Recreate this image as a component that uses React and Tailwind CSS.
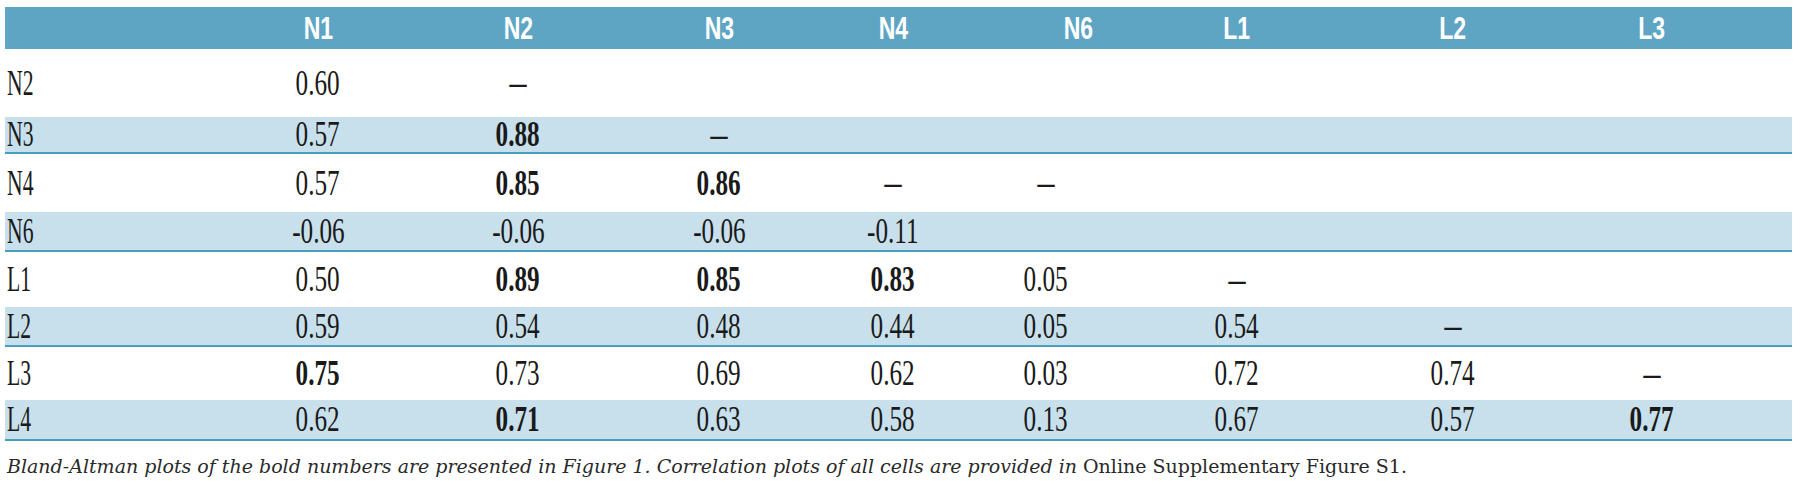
import React from "react";

const COLS = "grid grid-cols-[213px_200px_200px_202px_146px_160px_222px_210px_188px_46px] items-center";

const rows = [
  { label: "N2", blue: false, h: "h-[68px]", cells: ["0.60", "–"] },
  { label: "N3", blue: true, h: "h-[37px]", cells: ["0.57", "*0.88", "–"] },
  { label: "N4", blue: false, h: "h-[58px]", cells: ["0.57", "*0.85", "*0.86", "–", "–"] },
  { label: "N6", blue: true, h: "h-[40px]", cells: ["-0.06", "-0.06", "-0.06", "-0.11"] },
  { label: "L1", blue: false, h: "h-[55px]", cells: ["0.50", "*0.89", "*0.85", "*0.83", "0.05", "–"] },
  { label: "L2", blue: true, h: "h-[40px]", cells: ["0.59", "0.54", "0.48", "0.44", "0.05", "0.54", "–"] },
  { label: "L3", blue: false, h: "h-[53px]", cells: ["*0.75", "0.73", "0.69", "0.62", "0.03", "0.72", "0.74", "–"] },
  { label: "L4", blue: true, h: "h-[41px]", cells: ["0.62", "*0.71", "0.63", "0.58", "0.13", "0.67", "0.57", "*0.77"] },
];

const headers = ["N1", "N2", "N3", "N4", "N6", "L1", "L2", "L3"];

function Cell({ v }) {
  if (v === "–") {
    return (
      <div className="text-center">
        <span className="inline-block font-bold text-[34px] leading-none text-[#1a1a1a] [font-family:'Liberation_Serif',serif]">–</span>
      </div>
    );
  }
  const bold = v.startsWith("*");
  const t = bold ? v.slice(1) : v;
  return (
    <div className="text-center">
      <span
        className={
          "inline-block origin-center scale-x-[0.72] text-[35px] leading-none text-[#1a1a1a] [font-family:'Liberation_Serif',serif] " +
          (bold ? "font-bold" : "font-normal")
        }
      >
        {t}
      </span>
    </div>
  );
}

export default function App() {
  return (
    <div className="w-[1800px] h-[486px] bg-white pt-[7px] pl-[5px] overflow-hidden">
      <div className="w-[1787px]">
        <div className={COLS + " h-[42px] bg-[#5ea5c4]"}>
          <div />
          {headers.map((h, i) => (
            <div key={h} className={"text-center " + (i === 4 ? "pl-[64px]" : "")}>
              <span className="inline-block origin-center scale-x-[0.72] text-[32px] font-bold leading-none text-white [font-family:'Liberation_Sans',sans-serif]">
                {h}
              </span>
            </div>
          ))}
          <div />
        </div>
        {rows.map((r) => (
          <div
            key={r.label}
            className={
              COLS +
              " " +
              r.h +
              (r.blue ? " bg-[#c8e0ec] border-b-2 border-[#4b9dc0]" : " bg-white")
            }
          >
            <div className="pl-[2px]">
              <span className="inline-block origin-left scale-x-[0.62] text-[35px] leading-none text-[#1a1a1a] [font-family:'Liberation_Serif',serif]">
                {r.label}
              </span>
            </div>
            {headers.map((h, i) => (
              <div key={h}>{r.cells[i] !== undefined ? <Cell v={r.cells[i]} /> : null}</div>
            ))}
            <div />
          </div>
        ))}
        <p className="mt-[13px] pl-[2px] text-[19px] leading-[24px] text-[#2a2a2a] [font-family:'DejaVu_Serif',serif]">
          <span className="italic">
            Bland-Altman plots of the bold numbers are presented in Figure 1. Correlation plots of all cells are provided in{" "}
          </span>
          <span>Online Supplementary Figure S1.</span>
        </p>
      </div>
    </div>
  );
}
